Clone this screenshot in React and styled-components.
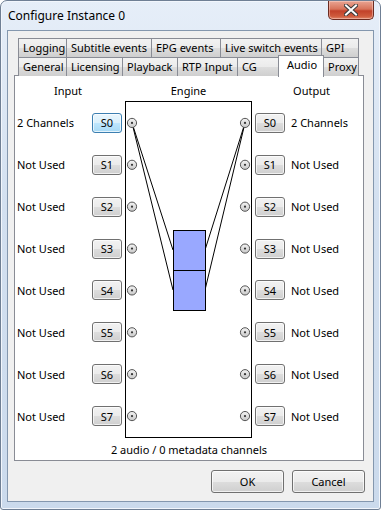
import React from "react";
import styled, { createGlobalStyle } from "styled-components";

const GlobalStyle = createGlobalStyle`
  html, body {
    margin: 0;
    padding: 0;
    background: #ffffff;
  }
  body {
    font-family: "Noto Sans", "DejaVu Sans", sans-serif;
    font-size: 11px;
    color: #000;
  }
`;

const ROW_H = 335 / 8;

const tabRows = [
  [
    { label: "Logging", w: 49 },
    { label: "Subtitle events", w: 85 },
    { label: "EPG events", w: 69 },
    { label: "Live switch events", w: 101 },
    { label: "GPI", w: 37 },
  ],
  [
    { label: "General", w: 49 },
    { label: "Licensing", w: 56 },
    { label: "Playback", w: 55 },
    { label: "RTP Input", w: 60 },
    { label: "CG", w: 41 },
    { label: "Audio", w: 45, active: true },
    { label: "Proxy", w: 35 },
  ],
];

const channels = [0, 1, 2, 3, 4, 5, 6, 7].map((i) => ({
  id: `S${i}`,
  label: i === 0 ? "2 Channels" : "Not Used",
}));

const Connector = ({ cx, cy }) => (
  <g>
    <circle cx={cx} cy={cy} r={4.6} fill="url(#conn)" stroke="#555" strokeWidth="1" />
    <circle cx={cx} cy={cy} r={1.1} fill="#333" />
  </g>
);

const EngineDrawing = () => {
  const lx = 6;
  const rx = 119;
  const y0 = ROW_H / 2;
  return (
    <svg width="125" height="335" viewBox="0 0 125 335">
      <defs>
        <linearGradient id="conn" x1="0" y1="0" x2="0" y2="1">
          <stop offset="0" stopColor="#f4f4f4" />
          <stop offset="1" stopColor="#c8c8c8" />
        </linearGradient>
      </defs>
      <g stroke="#000" strokeWidth="1">
        <line x1={lx} y1={y0} x2={47} y2={148} />
        <line x1={lx} y1={y0} x2={47} y2={188} />
        <line x1={rx} y1={y0} x2={79} y2={148} />
        <line x1={rx} y1={y0} x2={79} y2={188} />
      </g>
      <rect x="47.5" y="128.5" width="32" height="40" fill="#99a8ff" stroke="#000" />
      <rect x="47.5" y="168.5" width="32" height="40" fill="#99a8ff" stroke="#000" />
      {channels.map((c, i) => (
        <g key={c.id}>
          <Connector cx={lx} cy={y0 + i * ROW_H} />
          <Connector cx={rx} cy={y0 + i * ROW_H} />
        </g>
      ))}
    </svg>
  );
};

const CloseGlyph = () => (
  <svg width="14" height="12" viewBox="0 0 14 12">
    <path
      d="M2 1.5 L12 10.5 M12 1.5 L2 10.5"
      stroke="#3a3a3a"
      strokeWidth="4"
      strokeLinecap="square"
    />
    <path
      d="M2 1.5 L12 10.5 M12 1.5 L2 10.5"
      stroke="#ffffff"
      strokeWidth="2"
      strokeLinecap="square"
    />
  </svg>
);

export default function App() {
  return (
    <>
      <GlobalStyle />
      <Window>
        <TitleBar>
          <Title>Configure Instance 0</Title>
          <CloseButton>
            <CloseGlyph />
          </CloseButton>
        </TitleBar>
        <Client>
          <TabStrip>
            {tabRows.map((row, r) => (
              <TabRow key={r}>
                {row.map((t) => (
                  <Tab key={t.label} $w={t.w} $active={t.active}>
                    {t.label}
                  </Tab>
                ))}
              </TabRow>
            ))}
          </TabStrip>
          <Panel>
            <Grid>
              <Header $shift={-2}>Input</Header>
              <Header>Engine</Header>
              <Header $shift={4}>Output</Header>

              <Side>
                {channels.map((c, i) => (
                  <ChannelRow key={c.id}>
                    <ChannelLabel>{c.label}</ChannelLabel>
                    <SlotButton $focused={i === 0}>{c.id}</SlotButton>
                  </ChannelRow>
                ))}
              </Side>
              <EngineBox>
                <EngineDrawing />
              </EngineBox>
              <Side>
                {channels.map((c) => (
                  <ChannelRow key={c.id} $right>
                    <SlotButton>{c.id}</SlotButton>
                    <ChannelLabel>{c.label}</ChannelLabel>
                  </ChannelRow>
                ))}
              </Side>

              <Footer>2 audio / 0 metadata channels</Footer>
            </Grid>
          </Panel>
          <ButtonBar>
            <DialogButton>OK</DialogButton>
            <DialogButton>Cancel</DialogButton>
          </ButtonBar>
        </Client>
      </Window>
    </>
  );
}

const Window = styled.div`
  width: 381px;
  height: 510px;
  box-sizing: border-box;
  border: 1px solid #6f7f94;
  border-radius: 7px 7px 3px 3px;
  background: linear-gradient(180deg, #e6eef8 0%, #d3e0f0 40%, #cbdaec 100%);
  box-shadow: inset 0 0 0 1px #f2f6fc;
  padding: 0 6px 7px 6px;
  display: flex;
  flex-direction: column;
`;

const TitleBar = styled.div`
  height: 29px;
  display: flex;
  justify-content: space-between;
  align-items: flex-start;
`;

const Title = styled.div`
  align-self: center;
  padding-left: 1px;
  font-size: 12px;
  color: #000;
`;

const CloseButton = styled.div`
  width: 46px;
  height: 19px;
  box-sizing: border-box;
  border: 1px solid #6b2b20;
  border-top: none;
  border-radius: 0 0 5px 5px;
  background: linear-gradient(180deg, #e9a593 0%, #d7735a 45%, #c2412a 55%, #cf5b3d 85%, #e0876b 100%);
  box-shadow: inset 0 0 0 1px rgba(255, 220, 210, 0.45);
  display: flex;
  align-items: center;
  justify-content: center;
`;

const Client = styled.div`
  flex: 1;
  background: #f0f0f0;
  border: 1px solid #8497ae;
  display: flex;
  flex-direction: column;
  padding: 7px 8px 0 6px;
`;

const TabStrip = styled.div`
  display: flex;
  flex-direction: column;
  margin-left: 4px;
  position: relative;
  z-index: 1;
`;

const TabRow = styled.div`
  display: flex;
  height: 19px;
`;

const Tab = styled.div`
  width: ${(p) => p.$w}px;
  box-sizing: border-box;
  border: 1px solid #898c95;
  border-left: none;
  &:first-child {
    border-left: 1px solid #898c95;
  }
  border-bottom: none;
  white-space: nowrap;
  overflow: hidden;
  font-size: 11px;
  line-height: 17px;
  padding-left: 4px;
  background: ${(p) =>
    p.$active ? "#ffffff" : "linear-gradient(180deg, #f2f2f2 0%, #ebebeb 50%, #dddddd 51%, #cfcfcf 100%)"};
  ${(p) =>
    p.$active &&
    `
    height: 22px;
    margin-top: -2px;
    border-left: 1px solid #898c95;
    margin-left: -1px;
    width: ${p.$w + 1}px;
    padding-left: 8px;
    line-height: 17px;
  `}
`;

const Panel = styled.div`
  width: 350px;
  height: 386px;
  box-sizing: border-box;
  background: #ffffff;
  border: 1px solid #898c95;
  margin-top: -1px;
`;

const Grid = styled.div`
  display: grid;
  grid-template-columns: 110px 127px 1fr;
  grid-template-rows: 24px 337px 1fr;
`;

const Header = styled.div`
  text-align: center;
  padding-top: 7px;
  line-height: 16px;
  position: relative;
  left: ${(p) => p.$shift || 0}px;
`;

const Side = styled.div`
  display: flex;
  flex-direction: column;
  padding-top: 2px;
`;

const ChannelRow = styled.div`
  height: ${ROW_H}px;
  display: flex;
  align-items: center;
  flex-direction: row;
  justify-content: ${(p) => (p.$right ? "flex-start" : "space-between")};
  padding: ${(p) => (p.$right ? "0 0 0 3px" : "0 3px 0 2px")};
  gap: ${(p) => (p.$right ? "6px" : "0")};
`;

const ChannelLabel = styled.span`
  white-space: nowrap;
`;

const SlotButton = styled.div`
  width: 30px;
  height: 20px;
  box-sizing: border-box;
  border: 1px solid ${(p) => (p.$focused ? "#3c7fb1" : "#707070")};
  border-radius: 3px;
  background: ${(p) =>
    p.$focused
      ? "linear-gradient(180deg, #eaf6fd 0%, #d9f0fc 50%, #bee6fd 51%, #a7d9f5 100%)"
      : "linear-gradient(180deg, #f2f2f2 0%, #ebebeb 50%, #dddddd 51%, #cfcfcf 100%)"};
  box-shadow: inset 0 0 0 1px rgba(255, 255, 255, 0.7);
  display: flex;
  align-items: center;
  justify-content: center;
  font-size: 11px;
`;

const EngineBox = styled.div`
  width: 127px;
  height: 337px;
  box-sizing: border-box;
  border: 1px solid #000;
  margin-top: 1px;
  svg {
    display: block;
  }
`;

const Footer = styled.div`
  grid-column: 1 / -1;
  text-align: center;
  padding-top: 5px;
  line-height: 16px;
`;

const ButtonBar = styled.div`
  display: flex;
  justify-content: flex-end;
  gap: 8px;
  padding-top: 9px;
`;

const DialogButton = styled.div`
  width: 73px;
  height: 23px;
  box-sizing: border-box;
  border: 1px solid #707070;
  border-radius: 3px;
  background: linear-gradient(180deg, #f2f2f2 0%, #ebebeb 50%, #dddddd 51%, #cfcfcf 100%);
  box-shadow: inset 0 0 0 1px rgba(255, 255, 255, 0.7);
  display: flex;
  align-items: center;
  justify-content: center;
`;
